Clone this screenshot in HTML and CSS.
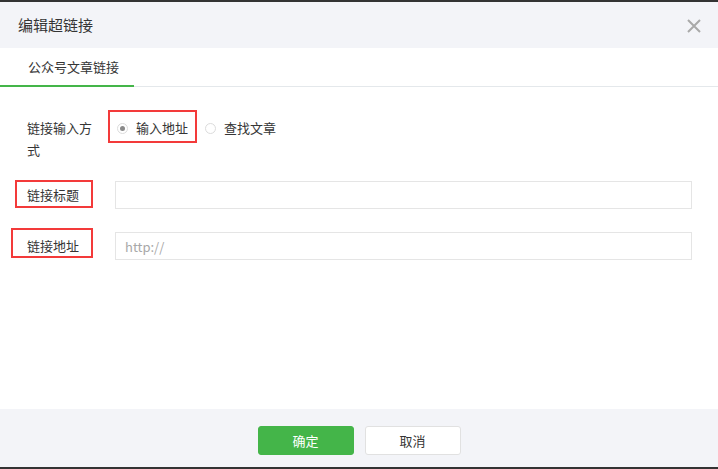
FILE: index.html
```html
<!DOCTYPE html>
<html>
    <head>
        <title>编辑超链接</title>
        <meta charset="utf-8">
        <link rel="stylesheet" href="styles.css">
    </head>
    <body>
        <div class="dialog">
            <header class="dlg-head">
                <h1>编辑超链接</h1>
                <span class="close">
                    <svg width="14" height="14" viewBox="0 0 14 14">
                        <path d="M1 1 L13 13 M13 1 L1 13" stroke="#a9a9a9" stroke-width="2" fill="none"/>
                    </svg>
                </span>
            </header>
            <nav class="tabs">
                <span class="tab active">公众号文章链接</span>
            </nav>
            <section class="form">
                <div class="row row-radio">
                    <label class="label">链接输入方式</label>
                    <div class="radios">
                        <span class="radio checked"><i></i>输入地址</span>
                        <span class="radio"><i></i>查找文章</span>
                    </div>
                    <span class="mark mark-1"></span>
                </div>
                <div class="row">
                    <label class="label">链接标题</label>
                    <input type="text" class="text">
                    <span class="mark mark-2"></span>
                </div>
                <div class="row row-last">
                    <label class="label">链接地址</label>
                    <input type="text" class="text" placeholder="http://">
                    <span class="mark mark-3"></span>
                </div>
            </section>
            <footer class="dlg-foot">
                <button class="btn btn-primary">确定</button>
                <button class="btn">取消</button>
            </footer>
        </div>
    </body>
</html>
```

FILE: styles.css
```css
body{
    margin: 0;
    font-family: "Noto Sans CJK SC", "Liberation Sans", sans-serif;
    color: #353535;
    background-color: #fff;
}
.dialog{
    width: 718px;
    height: 469px;
    box-sizing: border-box;
    border-top: 2px solid #333;
    border-bottom: 2px solid #333;
    display: flex;
    flex-direction: column;
}
.dlg-head{
    height: 46px;
    background-color: #f3f4f8;
    display: flex;
    align-items: center;
    justify-content: space-between;
    padding: 0 17px 0 18px;
}
h1{
    margin: 0;
    font-size: 15px;
    font-weight: normal;
    line-height: 46px;
}
.close{
    display: flex;
    margin-top: 2px;
}
.tabs{
    height: 38px;
    border-bottom: 1px solid #e4e8eb;
    display: flex;
}
.tab{
    width: 134px;
    height: 39px;
    box-sizing: border-box;
    margin-bottom: -1px;
    padding-left: 28px;
    font-size: 13px;
    line-height: 37px;
}
.tab.active{
    border-bottom: 2px solid #44b549;
}
.form{
    flex: 1;
    padding-top: 30px;
}
.row{
    position: relative;
    display: flex;
    align-items: flex-start;
    margin-bottom: 23px;
}
.row-radio{
    margin-bottom: 20px;
}
.label{
    width: 70px;
    margin-left: 27px;
    margin-right: 18px;
    font-size: 13px;
    line-height: 28px;
}
.row-radio .label{
    line-height: 22px;
}
.radios{
    display: flex;
    font-size: 13px;
    line-height: 22px;
}
.radio{
    display: flex;
    align-items: center;
    margin-right: 15px;
}
.radio i{
    width: 11px;
    height: 11px;
    box-sizing: border-box;
    border: 1px solid #dcdcdc;
    border-radius: 50%;
    margin: 1px 8px 0 2px;
    display: flex;
    align-items: center;
    justify-content: center;
}
.radio.checked i::after{
    content: "";
    width: 5px;
    height: 5px;
    border-radius: 50%;
    background-color: #8a8a8a;
}
.text{
    width: 577px;
    height: 28px;
    box-sizing: border-box;
    border: 1px solid #e5e5e5;
    padding: 0 9px;
    font-family: "Noto Sans CJK SC", "Liberation Sans", sans-serif;
    font-size: 13px;
    outline: none;
}
.text::placeholder{
    color: #a8a8a8;
}
.mark{
    position: absolute;
    box-sizing: border-box;
    border: 2px solid #f33a3a;
}
.mark-1{
    left: 108px;
    top: -7px;
    width: 89px;
    height: 33px;
}
.mark-2{
    left: 15px;
    top: -1px;
    width: 78px;
    height: 28px;
}
.mark-3{
    left: 11px;
    top: -4px;
    width: 82px;
    height: 30px;
}
.dlg-foot{
    height: 58px;
    box-sizing: border-box;
    background-color: #f3f4f8;
    display: flex;
    justify-content: center;
    gap: 11px;
    padding-top: 17px;
}
.btn{
    width: 96px;
    height: 29px;
    border: 1px solid #e1e1e1;
    border-radius: 3px;
    background-color: #fff;
    color: #353535;
    font-family: "Noto Sans CJK SC", "Liberation Sans", sans-serif;
    font-size: 13px;
    padding: 0;
}
.btn-primary{
    background-color: #44b549;
    border-color: #44b549;
    color: #fff;
}
```
